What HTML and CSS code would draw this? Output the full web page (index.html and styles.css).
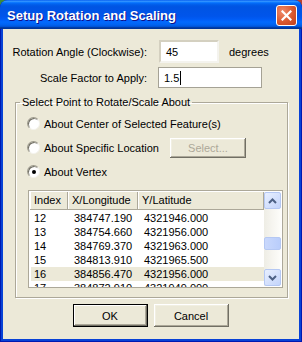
FILE: index.html
```html
<!DOCTYPE html>
<html lang="en">
<head>
    <meta charset="UTF-8">
    <title>Setup Rotation and Scaling</title>
    <link rel="stylesheet" href="styles.css">
</head>
<body>
    <div class="window">
        <div class="titlebar">
            <span class="title">Setup Rotation and Scaling</span>
            <button class="close" aria-label="Close">
                <svg width="11" height="11" viewBox="0 0 11 11"><path d="M1.5 1.5 L9.5 9.5 M9.5 1.5 L1.5 9.5" stroke="#fff" stroke-width="2.2" stroke-linecap="square"/></svg>
            </button>
        </div>
        <div class="client">
            <div class="field-row">
                <label class="field-label">Rotation Angle (Clockwise):</label>
                <div class="text-input angle">45</div>
                <span class="unit">degrees</span>
            </div>
            <div class="field-row">
                <label class="field-label">Scale Factor to Apply:</label>
                <div class="text-input scale">1.5<span class="caret"></span></div>
            </div>

            <fieldset class="group">
                <legend>Select Point to Rotate/Scale About</legend>
                <div class="option"><span class="radio"></span>About Center of Selected Feature(s)</div>
                <div class="option"><span class="radio"></span>About Specific Location<button class="btn select" disabled>Select...</button></div>
                <div class="option"><span class="radio checked"></span>About Vertex</div>

                <div class="list">
                    <div class="grid">
                        <div class="list-head">
                            <span>Index</span><span>X/Longitude</span><span>Y/Latitude</span>
                        </div>
                        <div class="list-body">
                            <div class="list-row"><span>12</span><span>384747.190</span><span>4321946.000</span></div>
                            <div class="list-row"><span>13</span><span>384754.660</span><span>4321956.000</span></div>
                            <div class="list-row"><span>14</span><span>384769.370</span><span>4321963.000</span></div>
                            <div class="list-row"><span>15</span><span>384813.910</span><span>4321965.500</span></div>
                            <div class="list-row selected"><span>16</span><span>384856.470</span><span>4321956.000</span></div>
                            <div class="list-row"><span>17</span><span>384872.910</span><span>4321949.000</span></div>
                        </div>
                    </div>
                    <div class="vscroll">
                        <div class="sb-btn"><svg width="9" height="6" viewBox="0 0 9 6"><path d="M1 5 L4.5 1.5 L8 5" fill="none" stroke="#4d6185" stroke-width="2"/></svg></div>
                        <div class="sb-thumb"></div>
                        <div class="sb-btn down"><svg width="9" height="6" viewBox="0 0 9 6"><path d="M1 1 L4.5 4.5 L8 1" fill="none" stroke="#4d6185" stroke-width="2"/></svg></div>
                    </div>
                </div>
            </fieldset>

            <div class="actions">
                <button class="btn default">OK</button>
                <button class="btn">Cancel</button>
            </div>
        </div>
    </div>
</body>
</html>
```

FILE: styles.css
```css
body {
    margin: 0;
    background: linear-gradient(90deg, #3d8a3a 50%, #b8402e 50%);
}
.window {
    width: 302px;
    height: 342px;
    box-sizing: border-box;
    display: flex;
    flex-direction: column;
    background: #0842d6;
    box-shadow: inset 1px 0 #0019b0, inset -1px 0 #0019b0, inset 0 -1px #0019b0;
    border-radius: 8px 8px 0 0;
    overflow: hidden;
    font: 11px "Tahoma", "Liberation Sans", sans-serif;
    color: #000;
}
.titlebar {
    height: 29px;
    flex: none;
    display: flex;
    align-items: center;
    justify-content: space-between;
    padding: 2px 5px 0 7px;
    box-sizing: border-box;
    background: linear-gradient(180deg, #0058ee 0%, #3593ff 4%, #288eff 6%, #127dff 8%, #036ffc 10%, #0262ee 14%, #0057e5 20%, #0054e3 24%, #0055eb 56%, #005bf5 66%, #026afe 76%, #0062ef 86%, #0052d6 92%, #0040ab 94%, #003092 100%);
}
.title {
    color: #fff;
    font: bold 13px "Trebuchet MS", "Liberation Sans", sans-serif;
    text-shadow: 1px 1px #0f1089;
}
.close {
    width: 21px;
    height: 21px;
    padding: 0;
    border: 1px solid #fff;
    border-radius: 3px;
    background: radial-gradient(circle at 30% 30%, #f08a6a, #d9582f 55%, #c1401e);
    display: flex;
    align-items: center;
    justify-content: center;
}
.client {
    flex: 1;
    margin: 0 3px 3px;
    background: #ece9d8;
    padding-top: 11px;
    display: flex;
    flex-direction: column;
}
.field-row {
    display: flex;
    align-items: center;
}
.field-row + .field-row {
    margin-top: 4px;
}
.field-label {
    width: 144px;
    margin-right: 12px;
    text-align: right;
}
.text-input {
    box-sizing: border-box;
    background: #fff;
    display: flex;
    align-items: center;
    padding-left: 5px;
}
.angle {
    width: 60px;
    height: 23px;
    border: 2px solid;
    border-color: #d4d0c0 #f4f3ee #f4f3ee #d4d0c0;
}
.scale {
    width: 104px;
    height: 21px;
    margin-left: -1px;
    border: 1px solid #a5a295;
}
.caret {
    width: 1px;
    height: 14px;
    margin-left: 1px;
    background: #000;
}
.unit {
    margin-left: 10px;
}
.group {
    margin: 8px 11px 0 12px;
    padding: 0 0 9px;
    border: 1px solid #aca899;
    box-shadow: 1px 1px 0 #fff, inset 1px 1px 0 #fff;
    min-width: 0;
}
.group legend {
    margin-left: 4px;
    padding: 0 2px;
    line-height: 13px;
}
.option {
    display: flex;
    align-items: center;
    height: 21px;
    padding-left: 11px;
}
.group legend + .option {
    margin-top: 4px;
}
.option + .option {
    margin-top: 3px;
}
.radio {
    width: 13px;
    height: 13px;
    box-sizing: border-box;
    margin-right: 4px;
    border-radius: 50%;
    border: 1px solid;
    border-color: #9d9a8c #f4f3ee #f4f3ee #9d9a8c;
    background: #fff;
    box-shadow: inset 1px 1px #716f64;
    display: flex;
    align-items: center;
    justify-content: center;
}
.radio.checked::after {
    content: "";
    width: 4px;
    height: 4px;
    border-radius: 50%;
    background: #000;
}
.btn {
    width: 75px;
    height: 23px;
    padding: 0;
    font: inherit;
    color: #000;
    background: #ece9d8;
    border: none;
    box-shadow: inset -1px -1px #716f64, inset 1px 1px #fff, inset -2px -2px #aca899, inset 2px 2px #f1efe2;
}
.btn.default {
    box-shadow: inset 0 0 0 1px #000, inset -2px -2px #716f64, inset 2px 2px #fff, inset -3px -3px #aca899;
}
.btn.select {
    width: 76px;
    height: 20px;
    margin-left: 11px;
    color: #aca899;
}
.list {
    margin: 8px 4px 0 12px;
    height: 98px;
    box-sizing: border-box;
    display: flex;
    border: 1px solid #aca899;
    background: #fff;
}
.grid {
    flex: 1;
    overflow: hidden;
}
.list-head,
.list-row {
    display: grid;
    grid-template-columns: 38px 70px 1fr;
    white-space: nowrap;
}
.list-head {
    height: 18px;
    box-sizing: border-box;
    margin: 1px 0 0 1px;
    background: #ece9d8;
    border-bottom: 1px solid #aca899;
    line-height: 17px;
}
.list-head span {
    padding-left: 4px;
    border-right: 1px solid #aca899;
    box-shadow: inset 1px 0 #fff;
}
.list-body {
    padding: 1px 0 0 2px;
}
.list-row {
    height: 14px;
    line-height: 14px;
}
.list-row span {
    padding-left: 5px;
}
.list-row span:first-child {
    padding-left: 3px;
}
.list-row.selected {
    background: #ece9d8;
}
.vscroll {
    width: 17px;
    flex: none;
    display: flex;
    flex-direction: column;
    margin: 1px 1px 1px 0;
    background: linear-gradient(90deg, #eeede5, #f6f5f0 50%, #fdfdfa);
}
.sb-btn {
    height: 17px;
    box-sizing: border-box;
    border: 1px solid #b5c8f3;
    border-radius: 2px;
    background: linear-gradient(135deg, #e8effe, #c3d4fb);
    display: flex;
    align-items: center;
    justify-content: center;
}
.sb-btn.down {
    margin-top: auto;
}
.sb-thumb {
    height: 13px;
    margin-top: 28px;
    box-sizing: border-box;
    border: 1px solid #b5c8f3;
    border-radius: 2px;
    background: linear-gradient(90deg, #c9d8fc, #b9cdfb);
}
.actions {
    display: flex;
    justify-content: center;
    gap: 6px;
    margin-top: 6px;
    padding-right: 1px;
}
```
